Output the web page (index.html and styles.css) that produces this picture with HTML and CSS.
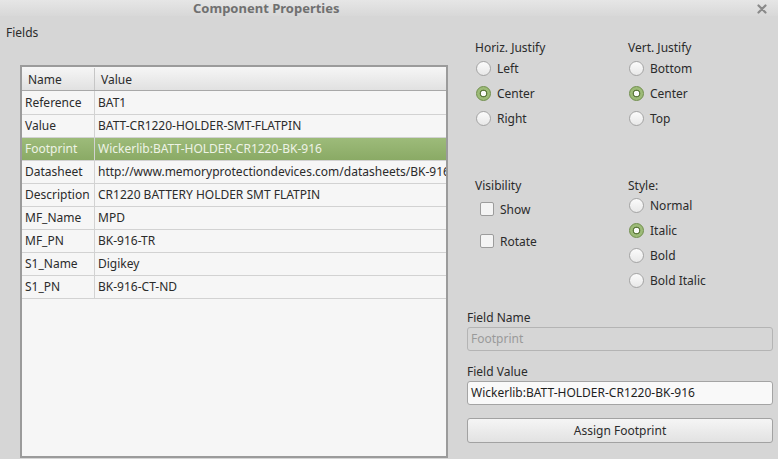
FILE: index.html
```html
<!DOCTYPE html>
<html>
<head>
<meta charset="utf-8">
<link rel="stylesheet" href="styles.css">
</head>
<body>
<div class="window">
  <div class="titlebar">
    <span class="title">Component Properties</span>
    <span class="close">
      <svg width="10" height="10" viewBox="0 0 10 10"><path d="M1.5 1.5 L8.5 8.5 M8.5 1.5 L1.5 8.5" stroke="#8a8a8a" stroke-width="2.2" stroke-linecap="round"/></svg>
    </span>
  </div>
  <div class="content">
    <div class="left">
      <div class="fields-label">Fields</div>
      <div class="tablebox">
        <div class="row head"><div class="c1">Name</div><div class="c2">Value</div></div>
        <div class="row first"><div class="c1">Reference</div><div class="c2">BAT1</div></div>
        <div class="row"><div class="c1">Value</div><div class="c2">BATT-CR1220-HOLDER-SMT-FLATPIN</div></div>
        <div class="row sel"><div class="c1">Footprint</div><div class="c2">Wickerlib:BATT-HOLDER-CR1220-BK-916</div></div>
        <div class="row"><div class="c1">Datasheet</div><div class="c2">http://www.memoryprotectiondevices.com/datasheets/BK-916-TR-datasheet.pdf</div></div>
        <div class="row"><div class="c1">Description</div><div class="c2">CR1220 BATTERY HOLDER SMT FLATPIN</div></div>
        <div class="row"><div class="c1">MF_Name</div><div class="c2">MPD</div></div>
        <div class="row"><div class="c1">MF_PN</div><div class="c2">BK-916-TR</div></div>
        <div class="row"><div class="c1">S1_Name</div><div class="c2">Digikey</div></div>
        <div class="row"><div class="c1">S1_PN</div><div class="c2">BK-916-CT-ND</div></div>
      </div>
    </div>
    <div class="panel">
      <div class="groups top">
        <div class="group">
          <div class="glabel">Horiz. Justify</div>
          <div class="opt"><span class="radio"></span>Left</div>
          <div class="opt"><span class="radio on"></span>Center</div>
          <div class="opt"><span class="radio"></span>Right</div>
        </div>
        <div class="group">
          <div class="glabel">Vert. Justify</div>
          <div class="opt"><span class="radio"></span>Bottom</div>
          <div class="opt"><span class="radio on"></span>Center</div>
          <div class="opt"><span class="radio"></span>Top</div>
        </div>
      </div>
      <div class="groups mid">
        <div class="group">
          <div class="glabel">Visibility</div>
          <div class="chk"><span class="box"></span>Show</div>
          <div class="chk"><span class="box"></span>Rotate</div>
        </div>
        <div class="group">
          <div class="glabel">Style:</div>
          <div class="opt"><span class="radio"></span>Normal</div>
          <div class="opt"><span class="radio on"></span>Italic</div>
          <div class="opt"><span class="radio"></span>Bold</div>
          <div class="opt"><span class="radio"></span>Bold Italic</div>
        </div>
      </div>
      <div class="form">
        <div class="flabel">Field Name</div>
        <div class="input disabled">Footprint</div>
        <div class="flabel">Field Value</div>
        <div class="input value">Wickerlib:BATT-HOLDER-CR1220-BK-916</div>
        <div class="button">Assign Footprint</div>
      </div>
    </div>
  </div>
</div>
</body>
</html>
```
FILE: styles.css
```css
* { box-sizing: border-box; }
html, body { margin: 0; padding: 0; }
body {
  width: 778px;
  height: 459px;
  overflow: hidden;
  background: #d6d6d6;
  font-family: "Noto Sans", "Open Sans", sans-serif;
  font-size: 12px;
  color: #2b2b2b;
}
.window { width: 778px; height: 459px; display: flex; flex-direction: column; }
.titlebar {
  height: 16px;
  flex: none;
  display: flex;
  align-items: center;
  padding-left: 193px;
  position: relative;
  background: linear-gradient(#e6e6e6, #d8d8d8);
}
.title {
  font-weight: bold;
  font-size: 13px;
  color: #707070;
  margin-top: -1px;
}
.close { position: absolute; right: 11px; top: 1px; }
.content { display: flex; flex: 1; min-height: 0; }
.left { display: flex; flex-direction: column; width: 448px; flex: none; }
.fields-label { padding: 9px 0 0 6px; height: 49px; line-height: 16px; }
.tablebox {
  margin: 0 0 1px 20px;
  flex: 1;
  border: 2px solid #9b9b9b;
  background: #f6f6f6;
  overflow: hidden;
}
.row { display: flex; height: 23px; border-bottom: 1px solid #d2d2d2; line-height: 22px; white-space: nowrap; }
.row.first { height: 24px; line-height: 23px; }
.row .c1 { width: 73px; padding-left: 3px; border-right: 1px solid #d2d2d2; flex: none; }
.row .c2 { padding-left: 3px; overflow: hidden; flex: 1; }
.row.head { height: 24px; line-height: 23px; padding-top: 1px; background: linear-gradient(#f6f6f6, #e1e1e1); border-bottom: 1px solid #a8a8a8; }
.row.head .c1 { padding-left: 6px; border-right: 1px solid #c6c6c6; }
.row.head .c2 { padding-left: 6px; }
.row.sel { background: linear-gradient(#9dbb7a, #8aaa65); color: #eef3e6; }
.panel { flex: 1; padding: 24px 5px 0 19px; display: flex; flex-direction: column; }
.groups { display: flex; }
.group { display: flex; flex-direction: column; }
.groups .group:first-child { width: 161px; padding-left: 8px; }
.glabel { height: 16px; line-height: 16px; }
.mid .glabel { height: 15px; line-height: 15px; }
.opt { display: flex; align-items: center; height: 25px; }
.radio {
  width: 15px; height: 15px; border-radius: 50%;
  border: 1px solid #a4a4a4;
  background: linear-gradient(#fbfbfb, #e8e8e8);
  margin: 0 6px 0 1px;
  flex: none;
}
.radio.on {
  border-color: #6f8e4a;
  background: radial-gradient(circle, #fafafa 0 2.5px, #5e7a3e 3px 3.6px, #9dbb78 4.2px);
}
.mid { margin-top: 47px; }
.chk { display: flex; align-items: center; height: 32px; padding-left: 5px; }
.box {
  width: 14px; height: 14px; border-radius: 2px;
  border: 1px solid #9c9c9c;
  background: #f4f4f4;
  margin-right: 6px;
}
.form { margin-top: 17px; display: flex; flex-direction: column; }
.flabel { height: 16px; line-height: 16px; margin-bottom: 1px; }
.input {
  height: 24px;
  border: 1px solid #a4a4a4;
  border-radius: 3px;
  background: #f9f9f9;
  padding-left: 3px;
  line-height: 22px;
  margin-bottom: 13px;
  color: #1e1e1e;
}
.input.disabled { background: #d6d6d6; color: #9a9a9a; border-color: #b4b4b4; }
.button {
  height: 25px;
  border: 1px solid #a2a2a2;
  border-radius: 3px;
  background: linear-gradient(#f5f5f5, #e2e2e2);
  text-align: center;
  line-height: 23px;
}
```
